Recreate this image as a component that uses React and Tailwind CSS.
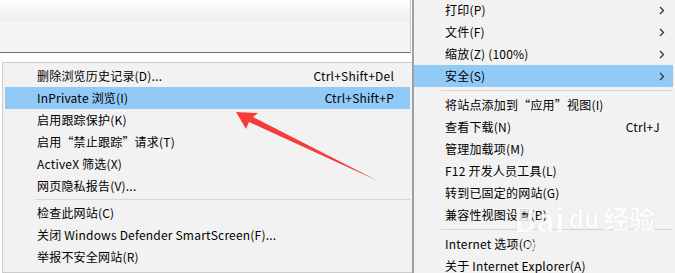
import React from "react";

const font = { fontFamily: '"Noto Sans CJK SC", "Liberation Sans", sans-serif' };

const subItems = [
  { label: "删除浏览历史记录(D)...", key: "Ctrl+Shift+Del" },
  { label: "InPrivate 浏览(I)", key: "Ctrl+Shift+P", active: true },
  { label: "启用跟踪保护(K)" },
  { label: "启用“禁止跟踪”请求(T)" },
  { label: "ActiveX 筛选(X)" },
  { label: "网页隐私报告(V)..." },
  { sep: true },
  { label: "检查此网站(C)" },
  { label: "关闭 Windows Defender SmartScreen(F)..." },
  { label: "举报不安全网站(R)" },
];

const mainItems = [
  { label: "打印(P)", arrow: true },
  { label: "文件(F)", arrow: true },
  { label: "缩放(Z) (100%)", arrow: true },
  { label: "安全(S)", arrow: true, active: true },
  { sep: true },
  { label: "将站点添加到“应用”视图(I)" },
  { label: "查看下载(N)", key: "Ctrl+J" },
  { label: "管理加载项(M)" },
  { label: "F12 开发人员工具(L)" },
  { label: "转到已固定的网站(G)" },
  { label: "兼容性视图设置(B)" },
  { sep: true },
  { label: "Internet 选项(O)" },
  { label: "关于 Internet Explorer(A)" },
];

const Chevron = () => (
  <svg width="6" height="9" viewBox="0 0 6 9" className="text-[#333]">
    <path d="M1 1 L4.5 4.5 L1 8" fill="none" stroke="currentColor" strokeWidth="1.3" />
  </svg>
);

const SubMenu = () => (
  <div className="ml-[2px] mt-[8px] w-[411px] h-[211px] border border-[#cccccc] bg-[#f2f2f2] px-[2px] pt-[2px]">
    {subItems.map((it, i) =>
      it.sep ? (
        <div key={i} className="h-[5px] flex items-center pl-[30px]">
          <div className="h-px w-full bg-[#d5d5d5]" />
        </div>
      ) : (
        <div
          key={i}
          className={`h-[22px] flex items-center justify-between pl-[32px] pr-[16px] text-[12px] tracking-[0.2px] text-black ${
            it.active ? "bg-[#91c9f7]" : ""
          }`}
        >
          <span>{it.label}</span>
          {it.key && <span>{it.key}</span>}
        </div>
      )
    )}
  </div>
);

const MainMenu = () => (
  <div className="w-[263px] h-[273px] border-l-2 border-[#a0a0a0] bg-[#f2f2f2] pr-[2px] overflow-hidden">
    <div className="mt-[-1px]">
      {mainItems.map((it, i) =>
        it.sep ? (
          <div key={i} className="h-[7px] flex items-center pl-[27px]">
            <div className="h-px w-full bg-[#d5d5d5]" />
          </div>
        ) : (
          <div
            key={i}
            className={`h-[22px] flex items-center justify-between pl-[31px] pr-[8px] text-[12px] tracking-[0.2px] text-black ${
              it.active ? "bg-[#91c9f7]" : ""
            }`}
          >
            <span>{it.label}</span>
            {it.key && <span className="mr-[5px]">{it.key}</span>}
            {it.arrow && <Chevron />}
          </div>
        )
      )}
    </div>
  </div>
);

export default function App() {
  return (
    <div className="relative w-[675px] h-[273px] overflow-hidden bg-white" style={font}>
      <div className="flex">
        <div className="w-[412px] h-[273px] flex flex-col">
          <div className="flex">
            <div className="w-[410px]">
              <div className="h-[23px] bg-gradient-to-b from-white to-[#ececec] border-b border-[#fbfbfb]" />
              <div className="h-[30px] bg-[#f5f5f5] border-b border-[#6e6e6e]" />
            </div>
            <div className="w-px h-[54px] bg-[#c8c8c8]" />
          </div>
          <SubMenu />
        </div>
        <MainMenu />
      </div>

      <svg
        className="absolute left-0 top-0 pointer-events-none"
        width="675"
        height="273"
        viewBox="0 0 675 273"
      >
        <polygon
          points="236,112 258,113 253,117 378,181 249,122 246,129"
          fill="#f53b3b"
        />
      </svg>

      <div className="absolute left-[514px] top-[202px] pointer-events-none flex flex-col items-center text-white opacity-80">
        <div className="flex items-end gap-[4px] leading-[32px] font-bold [text-shadow:0_0_1px_#d0d0d0]">
          <span className="text-[32px]">Bai</span>
          <span className="text-[24px]">du</span>
          <span className="text-[26px]">经验</span>
        </div>
        <div className="text-[14px] leading-[16px] mt-[2px] [text-shadow:0_0_1px_#d0d0d0]">
          jingyan.baidu.com
        </div>
      </div>
    </div>
  );
}
